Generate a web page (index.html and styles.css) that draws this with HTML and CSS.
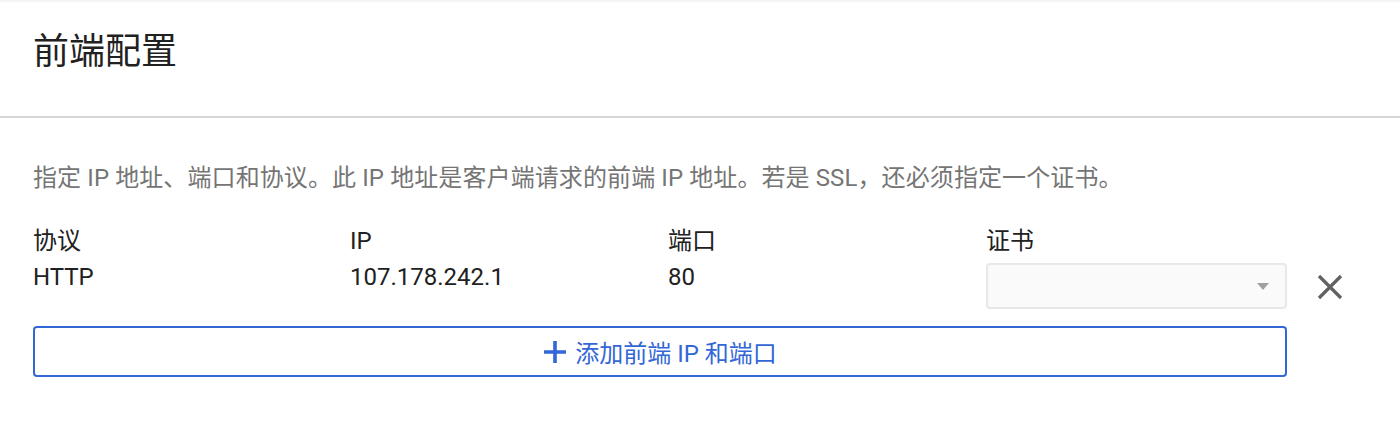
FILE: index.html
```html
<!DOCTYPE html>
<html lang="zh-CN">
<head>
    <meta charset="UTF-8">
    <title>前端配置</title>
    <link rel="stylesheet" href="styles.css">
</head>
<body>
    <header class="panel-head">
        <h1>前端配置</h1>
    </header>

    <section class="panel-body">
        <p class="hint">指定 IP 地址、端口和协议。此 IP 地址是客户端请求的前端 IP 地址。若是 SSL，还必须指定一个证书。</p>

        <div class="frontend-grid">
            <div class="col-label">协议</div>
            <div class="col-label">IP</div>
            <div class="col-label">端口</div>
            <div class="col-label">证书</div>
            <div></div>

            <div class="col-value">HTTP</div>
            <div class="col-value">107.178.242.1</div>
            <div class="col-value">80</div>
            <div class="col-value">
                <div class="select">
                    <span class="select-arrow"></span>
                </div>
            </div>
            <div class="col-value">
                <button class="remove" title="删除">
                    <svg width="28" height="28" viewBox="0 0 28 28">
                        <path d="M3 3 L25 25 M25 3 L3 25" stroke="#616161" stroke-width="3.2" fill="none"/>
                    </svg>
                </button>
            </div>
        </div>

        <button class="add-btn">
            <svg width="24" height="24" viewBox="0 0 24 24">
                <path d="M12 1 V23 M1 12 H23" stroke="#3367d6" stroke-width="3.6" fill="none"/>
            </svg>
            <span>添加前端 IP 和端口</span>
        </button>
    </section>
</body>
</html>
```

FILE: styles.css
```css
/* base */
body {
    margin: 0;
    padding: 0;
    font-family: Roboto, "Noto Sans CJK SC", sans-serif;
    color: #212121;
    background-color: #fff;
    box-shadow: inset 0 3px 3px -2px rgba(0, 0, 0, 0.08);
    min-height: 448px;
}

/* header with title */
.panel-head {
    height: 118px;
    padding: 0 33px;
    border-bottom: 2px solid #d6d6d6;
    box-sizing: border-box;
}

.panel-head h1 {
    margin: 0;
    padding-top: 30px;
    font-size: 36px;
    font-weight: 400;
    line-height: 44px;
    color: #212121;
}

/* body */
.panel-body {
    padding: 0 33px;
}

.hint {
    margin: 44px 0 0;
    font-size: 24px;
    line-height: 32px;
    color: #757575;
    letter-spacing: 0.1px;
}

.frontend-grid {
    display: grid;
    grid-template-columns: 317px 318px 318px 301px 1fr;
    margin-top: 29px;
    font-size: 24px;
}

.col-label,
.col-value {
    line-height: 36px;
}

.select {
    position: relative;
    margin-top: 4px;
    height: 46px;
    border: 2px solid #e8e8e8;
    border-radius: 4px;
    background-color: #fafafa;
    box-sizing: border-box;
}

.select-arrow {
    position: absolute;
    right: 16px;
    top: 18px;
    width: 0;
    height: 0;
    border-left: 6px solid transparent;
    border-right: 6px solid transparent;
    border-top: 7px solid #a0a0a0;
}

.remove {
    margin: 14px 0 0 29px;
    padding: 0;
    border: none;
    background: none;
    cursor: pointer;
    display: block;
}

.add-btn {
    margin-top: 17px;
    width: 1254px;
    height: 51px;
    border: 2px solid #3367d6;
    border-radius: 4px;
    background-color: #fff;
    color: #3367d6;
    font-family: Roboto, "Noto Sans CJK SC", sans-serif;
    font-size: 24px;
    display: flex;
    justify-content: center;
    align-items: center;
    gap: 8px;
    cursor: pointer;
}
```
